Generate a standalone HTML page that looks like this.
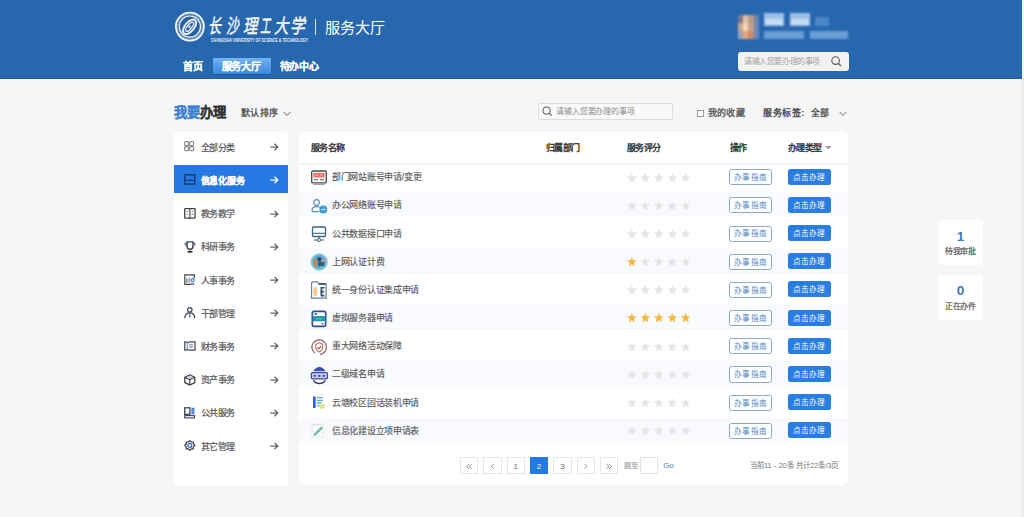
<!DOCTYPE html><html lang="zh-CN"><head><meta charset="utf-8"><style>
*{margin:0;padding:0;box-sizing:border-box;}
html,body{width:1024px;height:517px;overflow:hidden;background:#f6f6f6;font-family:"Liberation Sans",sans-serif;color:#333;}
.a{position:absolute;}
.t{position:absolute;white-space:nowrap;line-height:1;}
svg{position:absolute;overflow:visible;}
</style></head><body>
<div class="a" style="left:0;top:0;width:1024px;height:79px;background:#2767ae;"></div>
<div class="a" style="left:0;top:78px;width:1024px;height:1px;background:#23599a;"></div>
<svg style="left:174px;top:11px" width="32" height="32" viewBox="0 0 32 32">
<circle cx="15.9" cy="15.6" r="14.0" fill="none" stroke="#f4f8fd" stroke-width="1.8"/>
<circle cx="15.9" cy="15.6" r="12.2" fill="none" stroke="#c9dbf1" stroke-width="1.9" stroke-dasharray="1.1 0.7" opacity="0.55"/>
<circle cx="15.9" cy="15.6" r="10.6" fill="#285ea8" stroke="#f4f8fd" stroke-width="1.2"/>
<g transform="rotate(-50 15.6 15.8)">
<ellipse cx="15.6" cy="15.8" rx="8.6" ry="4.6" fill="none" stroke="#f2f7fd" stroke-width="1.9"/>
<ellipse cx="15.6" cy="15.8" rx="5.6" ry="2.2" fill="none" stroke="#e3eefa" stroke-width="1.3"/>
</g>
<circle cx="15.5" cy="15.7" r="1.2" fill="#e3eefa"/>
</svg>
<div class="t" style="left:211.0px;top:15.5px;font-family:'Liberation Serif',serif;font-weight:normal;font-size:13px;color:#f4f8fc;-webkit-text-stroke:0.35px #f4f8fc;transform:scale(1.000,1.5) skewX(-14deg);transform-origin:0 0;">长</div>
<div class="t" style="left:228.8px;top:15.5px;font-family:'Liberation Serif',serif;font-weight:normal;font-size:13px;color:#f4f8fc;-webkit-text-stroke:0.35px #f4f8fc;transform:scale(0.975,1.5) skewX(-14deg);transform-origin:0 0;">沙</div>
<div class="t" style="left:245.6px;top:15.5px;font-family:'Liberation Serif',serif;font-weight:normal;font-size:13px;color:#f4f8fc;-webkit-text-stroke:0.35px #f4f8fc;transform:scale(1.100,1.5) skewX(-14deg);transform-origin:0 0;">理</div>
<div class="t" style="left:262.3px;top:15.5px;font-family:'Liberation Serif',serif;font-weight:normal;font-size:13px;color:#f4f8fc;-webkit-text-stroke:0.35px #f4f8fc;transform:scale(0.808,1.5) skewX(-14deg);transform-origin:0 0;">工</div>
<div class="t" style="left:277.0px;top:15.5px;font-family:'Liberation Serif',serif;font-weight:normal;font-size:13px;color:#f4f8fc;-webkit-text-stroke:0.35px #f4f8fc;transform:scale(1.108,1.5) skewX(-14deg);transform-origin:0 0;">大</div>
<div class="t" style="left:293.3px;top:15.5px;font-family:'Liberation Serif',serif;font-weight:normal;font-size:13px;color:#f4f8fc;-webkit-text-stroke:0.35px #f4f8fc;transform:scale(1.142,1.5) skewX(-14deg);transform-origin:0 0;">学</div>
<svg style="left:211px;top:37px" width="98" height="6"><text x="0" y="4.6" font-family="Liberation Sans" font-weight="bold" font-size="5" fill="#e8eef7" textLength="97" lengthAdjust="spacingAndGlyphs">CHANGSHA UNIVERSITY OF SCIENCE &amp; TECHNOLOGY</text></svg>
<div class="a" style="left:315px;top:19px;width:1.4px;height:16px;background:#dbe6f3;"></div>
<div class="t" style="left:324.5px;top:20px;font-size:15.1px;color:#fff;">服务大厅</div>
<div class="a" style="left:212.5px;top:58px;width:58.3px;height:15.8px;border-radius:1px;background:linear-gradient(#76b4f5 0%,#5ca2ed 35%,#3d89de 100%);box-shadow:0 1px 1px rgba(20,70,140,0.5);"></div>
<div class="t" style="left:183px;top:61.8px;font-size:10px;letter-spacing:-0.3px;font-weight:bold;color:#fff;-webkit-text-stroke:0.15px #fff;">首页</div>
<div class="t" style="left:221.5px;top:61.8px;font-size:10px;letter-spacing:-0.3px;font-weight:bold;color:#fff;-webkit-text-stroke:0.15px #fff;">服务大厅</div>
<div class="t" style="left:279.5px;top:61.8px;font-size:10px;letter-spacing:-0.3px;font-weight:bold;color:#fff;-webkit-text-stroke:0.15px #fff;">待办中心</div>
<div class="a" style="left:730px;top:5px;width:130px;height:42px;filter:blur(0.9px);">
<div class="a" style="left:8.0px;top:10px;width:5.2px;height:8px;background:#7d7a8c;"></div>
<div class="a" style="left:13.200000000000045px;top:10px;width:5.2px;height:8px;background:#e0c3a8;"></div>
<div class="a" style="left:18.399999999999977px;top:10px;width:5.2px;height:8px;background:#b89a88;"></div>
<div class="a" style="left:23.600000000000023px;top:10px;width:5.2px;height:8px;background:#6f83ab;"></div>
<div class="a" style="left:8.0px;top:18px;width:5.2px;height:8px;background:#c6a98f;"></div>
<div class="a" style="left:13.200000000000045px;top:18px;width:5.2px;height:8px;background:#f1d8b8;"></div>
<div class="a" style="left:18.399999999999977px;top:18px;width:5.2px;height:8px;background:#c9a08a;"></div>
<div class="a" style="left:23.600000000000023px;top:18px;width:5.2px;height:8px;background:#6d86b5;"></div>
<div class="a" style="left:8.0px;top:26px;width:5.2px;height:8px;background:#9fa2b6;"></div>
<div class="a" style="left:13.200000000000045px;top:26px;width:5.2px;height:8px;background:#eaa47c;"></div>
<div class="a" style="left:18.399999999999977px;top:26px;width:5.2px;height:8px;background:#c98b70;"></div>
<div class="a" style="left:23.600000000000023px;top:26px;width:5.2px;height:8px;background:#6d8cc0;"></div>
<div class="a" style="left:34px;top:8px;width:20px;height:13px;background:#9fc0e7;"></div>
<div class="a" style="left:35px;top:14px;width:18px;height:6px;background:#c4dbf3;"></div>
<div class="a" style="left:60px;top:8px;width:20px;height:13px;background:#9fc0e7;"></div>
<div class="a" style="left:61px;top:14px;width:18px;height:6px;background:#c4dbf3;"></div>
<div class="a" style="left:85px;top:12px;width:14px;height:9px;background:#4d86c6;"></div>
<div class="a" style="left:34px;top:26px;width:40px;height:8px;background:#6b9cd4;"></div>
<div class="a" style="left:80px;top:26px;width:38px;height:8px;background:#6b9cd4;"></div>
</div>
<div class="a" style="left:738px;top:52px;width:111px;height:19px;background:#f2f2f2;border-radius:3px;"></div>
<div class="t" style="left:744px;top:57.5px;font-size:8px;letter-spacing:-0.4px;color:#a3a3a3;">请输入您要办理的事项</div>
<svg style="left:831px;top:56px" width="11" height="11"><circle cx="4.6" cy="4.6" r="3.8" fill="none" stroke="#555" stroke-width="1.1"/><path d="M7.4 7.4 L10 10" stroke="#555" stroke-width="1.2"/></svg>
<div class="t" style="left:173.5px;top:105.5px;font-size:13.3px;font-weight:bold;color:#333;-webkit-text-stroke:0.25px currentColor;"><span style="color:#3b80d6">我要</span>办理</div>
<div class="t" style="left:240.5px;top:108.5px;font-size:9px;letter-spacing:0.6px;font-weight:bold;color:#5a5a5a;">默认排序</div>
<svg style="left:283px;top:111px" width="8" height="6"><path d="M0.5 0.8 L4 4.5 L7.5 0.8" fill="none" stroke="#666" stroke-width="1"/></svg>
<div class="a" style="left:538px;top:103px;width:135px;height:17px;border:1px solid #dcdcdc;border-radius:2px;background:#f9f9f9;"></div>
<svg style="left:542px;top:106px" width="11" height="11"><circle cx="4.6" cy="4.6" r="3.7" fill="none" stroke="#555" stroke-width="1"/><path d="M7.3 7.3 L9.6 9.6" stroke="#555" stroke-width="1.1"/></svg>
<div class="t" style="left:556px;top:107.5px;font-size:8px;letter-spacing:-0.12px;color:#8c8c8c;">请输入您要办理的事项</div>
<div class="a" style="left:697.3px;top:110px;width:6.8px;height:6.8px;border:1px solid #9a9a9a;background:#fff;"></div>
<div class="t" style="left:707.5px;top:109px;font-size:9px;letter-spacing:0.4px;color:#555;-webkit-text-stroke:0.3px #555;">我的收藏</div>
<div class="t" style="left:763px;top:109px;font-size:9px;letter-spacing:0.55px;font-weight:bold;color:#444;">服务标签:</div>
<div class="t" style="left:811px;top:109px;font-size:8.9px;font-weight:bold;color:#555;">全部</div>
<svg style="left:839px;top:111px" width="8" height="6"><path d="M0.5 0.8 L4 4.5 L7.5 0.8" fill="none" stroke="#777" stroke-width="1"/></svg>
<div class="a" style="left:174px;top:131.5px;width:114px;height:354.5px;background:#fff;border-radius:4px;"></div>
<svg style="left:184px;top:141.3px" width="12" height="12" viewBox="0 0 12 12"><rect x="0.6" y="0.6" width="4" height="4" rx="1" fill="none" stroke="#888" stroke-width="1.1"/><rect x="5.6" y="0.6" width="4" height="4" rx="1" fill="none" stroke="#888" stroke-width="1.1"/><rect x="0.6" y="5.6" width="4" height="4" rx="1" fill="none" stroke="#888" stroke-width="1.1"/><rect x="5.6" y="5.6" width="4" height="4" rx="1" fill="none" stroke="#888" stroke-width="1.1"/></svg>
<div class="t" style="left:201px;top:143.8px;font-size:9px;letter-spacing:-0.6px;color:#555;font-weight:normal;-webkit-text-stroke:0.2px #555;">全部分类</div>
<svg style="left:270px;top:143.2px" width="9" height="8" viewBox="0 0 9 8"><path d="M0.3 4 H7.8 M4.5 0.7 L7.8 4 L4.5 7.3" fill="none" stroke="#666" stroke-width="1.25"/></svg>
<div class="a" style="left:174px;top:165.4px;width:114px;height:27.4px;background:#2479e2;"></div>
<svg style="left:184px;top:173.5px" width="12" height="12" viewBox="0 0 12 12"><rect x="0.8" y="0.8" width="10" height="9.2" fill="none" stroke="#143f7c" stroke-width="1.5"/><path d="M0.8 6.4 H10.8" stroke="#143f7c" stroke-width="1.3"/><path d="M3 8.3 H8.6" stroke="#3f79c9" stroke-width="0.8"/></svg>
<div class="t" style="left:200.5px;top:177.0px;font-size:9px;letter-spacing:-0.25px;color:#fff;font-weight:bold;-webkit-text-stroke:0.2px #fff;">信息化服务</div>
<svg style="left:270px;top:176.4px" width="9" height="8" viewBox="0 0 9 8"><path d="M0.3 4 H7.8 M4.5 0.7 L7.8 4 L4.5 7.3" fill="none" stroke="#fff" stroke-width="1.25"/></svg>
<svg style="left:184px;top:207.7px" width="12" height="12" viewBox="0 0 12 12"><rect x="0.7" y="0.7" width="10.4" height="9.4" rx="0.6" fill="none" stroke="#444" stroke-width="1.3"/><path d="M5.9 0.7 V10.6" stroke="#444" stroke-width="1.1"/><path d="M2.3 3.4 H4.3 M2.3 6.3 H4.3 M7.5 3.4 H9.5 M7.5 6.3 H9.5" stroke="#667" stroke-width="0.8"/><path d="M5.9 10 V11" stroke="#333" stroke-width="1.4"/></svg>
<div class="t" style="left:201px;top:210.2px;font-size:9px;letter-spacing:-0.6px;color:#555;font-weight:normal;-webkit-text-stroke:0.2px #555;">教务教学</div>
<svg style="left:270px;top:209.6px" width="9" height="8" viewBox="0 0 9 8"><path d="M0.3 4 H7.8 M4.5 0.7 L7.8 4 L4.5 7.3" fill="none" stroke="#666" stroke-width="1.25"/></svg>
<svg style="left:184px;top:240.9px" width="12" height="12" viewBox="0 0 12 12"><path d="M3 0.9 H9 V5 C9 7.3 7.6 8.3 6 8.3 C4.4 8.3 3 7.3 3 5 Z" fill="none" stroke="#3a3f55" stroke-width="1.4"/><path d="M3 2.3 H0.9 C0.9 4.3 1.9 5.3 3.1 5.3 M9 2.3 H11.1 C11.1 4.3 10.1 5.3 8.9 5.3" fill="none" stroke="#4a5478" stroke-width="1"/><path d="M6 8.3 V9.6" stroke="#333" stroke-width="1.2"/><path d="M3.6 10.8 H8.4" stroke="#222" stroke-width="1.6"/></svg>
<div class="t" style="left:201px;top:243.4px;font-size:9px;letter-spacing:-0.6px;color:#555;font-weight:normal;-webkit-text-stroke:0.2px #555;">科研事务</div>
<svg style="left:270px;top:242.8px" width="9" height="8" viewBox="0 0 9 8"><path d="M0.3 4 H7.8 M4.5 0.7 L7.8 4 L4.5 7.3" fill="none" stroke="#666" stroke-width="1.25"/></svg>
<svg style="left:184px;top:274.1px" width="12" height="12" viewBox="0 0 12 12"><path d="M7.5 10.3 H0.8 V0.8 H10.4 V4" fill="none" stroke="#444" stroke-width="1.2"/><path d="M3 4.5 V8.8" stroke="#555" stroke-width="1.1"/><path d="M5.2 3.8 V8.8" stroke="#888" stroke-width="1.1"/><circle cx="8.6" cy="6.2" r="1.6" fill="none" stroke="#3a6fd1" stroke-width="1.1"/><path d="M6.4 10.6 C6.6 8.6 10.6 8.6 10.8 10.6 Z" fill="#3a6fd1"/></svg>
<div class="t" style="left:201px;top:276.6px;font-size:9px;letter-spacing:-0.6px;color:#555;font-weight:normal;-webkit-text-stroke:0.2px #555;">人事事务</div>
<svg style="left:270px;top:276.0px" width="9" height="8" viewBox="0 0 9 8"><path d="M0.3 4 H7.8 M4.5 0.7 L7.8 4 L4.5 7.3" fill="none" stroke="#666" stroke-width="1.25"/></svg>
<svg style="left:184px;top:307.3px" width="12" height="12" viewBox="0 0 12 12"><circle cx="5.8" cy="2.8" r="2.2" fill="none" stroke="#3b3f4d" stroke-width="1.2"/><path d="M0.8 11.2 C1 7.3 3.2 5.9 5.8 5.9 C8.4 5.9 10.6 7.3 10.8 11.2" fill="none" stroke="#3b3f4d" stroke-width="1.2"/><path d="M5.8 6.2 V9.8" stroke="#4d6fb0" stroke-width="1.3"/><path d="M4.9 9.2 L5.8 11 L6.7 9.2 Z" fill="#4d6fb0"/></svg>
<div class="t" style="left:201px;top:309.8px;font-size:9px;letter-spacing:-0.6px;color:#555;font-weight:normal;-webkit-text-stroke:0.2px #555;">干部管理</div>
<svg style="left:270px;top:309.2px" width="9" height="8" viewBox="0 0 9 8"><path d="M0.3 4 H7.8 M4.5 0.7 L7.8 4 L4.5 7.3" fill="none" stroke="#666" stroke-width="1.25"/></svg>
<svg style="left:184px;top:340.5px" width="12" height="12" viewBox="0 0 12 12"><path d="M0.8 0.8 C2 0.8 2.8 1.6 3.3 1.6 C3.8 1.6 4.4 0.8 5.5 0.8 H11 V9.2 H5.5 C4.4 9.2 3.8 8.4 3.3 8.4 C2.8 8.4 2 9.2 0.8 9.2 Z" fill="none" stroke="#404552" stroke-width="1.2"/><path d="M3.3 1.6 V8.4" stroke="#5c7bb5" stroke-width="0.9"/><path d="M5.2 3.9 H8.8 M5.2 6 H8.8" stroke="#4d6fb0" stroke-width="1"/></svg>
<div class="t" style="left:201px;top:343.0px;font-size:9px;letter-spacing:-0.6px;color:#555;font-weight:normal;-webkit-text-stroke:0.2px #555;">财务事务</div>
<svg style="left:270px;top:342.4px" width="9" height="8" viewBox="0 0 9 8"><path d="M0.3 4 H7.8 M4.5 0.7 L7.8 4 L4.5 7.3" fill="none" stroke="#666" stroke-width="1.25"/></svg>
<svg style="left:184px;top:373.7px" width="12" height="12" viewBox="0 0 12 12"><path d="M5.8 0.8 L10.8 3.3 V8.6 L5.8 11 L0.8 8.6 V3.3 Z" fill="none" stroke="#333" stroke-width="1.2"/><path d="M0.8 3.3 L5.8 5.7 L10.8 3.3 M5.8 5.7 V11" fill="none" stroke="#333" stroke-width="1.1"/><path d="M4 2.9 L7.5 1.8 M5 4.2 L8.5 3.1" stroke="#8aa2c9" stroke-width="0.8"/></svg>
<div class="t" style="left:201px;top:376.2px;font-size:9px;letter-spacing:-0.6px;color:#555;font-weight:normal;-webkit-text-stroke:0.2px #555;">资产事务</div>
<svg style="left:270px;top:375.6px" width="9" height="8" viewBox="0 0 9 8"><path d="M0.3 4 H7.8 M4.5 0.7 L7.8 4 L4.5 7.3" fill="none" stroke="#666" stroke-width="1.25"/></svg>
<svg style="left:184px;top:406.9px" width="12" height="12" viewBox="0 0 12 12"><rect x="0.7" y="0.8" width="5.2" height="6.6" fill="none" stroke="#3f4452" stroke-width="1.3"/><path d="M7.4 0.8 H10.4 V7.2 H7.4 Z" fill="#3b78d8"/><path d="M7.4 2.9 H10.4 M7.4 5 H10.4" stroke="#a9c8f2" stroke-width="0.6"/><rect x="0.7" y="8.6" width="9.8" height="2.3" fill="none" stroke="#3f4452" stroke-width="1.1"/></svg>
<div class="t" style="left:201px;top:409.4px;font-size:9px;letter-spacing:-0.6px;color:#555;font-weight:normal;-webkit-text-stroke:0.2px #555;">公共服务</div>
<svg style="left:270px;top:408.8px" width="9" height="8" viewBox="0 0 9 8"><path d="M0.3 4 H7.8 M4.5 0.7 L7.8 4 L4.5 7.3" fill="none" stroke="#666" stroke-width="1.25"/></svg>
<svg style="left:184px;top:440.1px" width="12" height="12" viewBox="0 0 12 12"><path d="M5.8 0.6 L7.3 2 L9.3 2 L9.4 4 L10.9 5.4 L9.4 6.9 L9.3 8.9 L7.3 8.9 L5.8 10.3 L4.3 8.9 L2.3 8.9 L2.2 6.9 L0.7 5.4 L2.2 4 L2.3 2 L4.3 2 Z" fill="none" stroke="#353a45" stroke-width="1.2" stroke-linejoin="round"/><circle cx="5.8" cy="5.45" r="2" fill="#dbe7fb" stroke="#3f6fc7" stroke-width="1.2"/></svg>
<div class="t" style="left:201px;top:442.6px;font-size:9px;letter-spacing:-0.6px;color:#555;font-weight:normal;-webkit-text-stroke:0.2px #555;">其它管理</div>
<svg style="left:270px;top:442.0px" width="9" height="8" viewBox="0 0 9 8"><path d="M0.3 4 H7.8 M4.5 0.7 L7.8 4 L4.5 7.3" fill="none" stroke="#666" stroke-width="1.25"/></svg>
<div class="a" style="left:299px;top:132px;width:549px;height:352.5px;background:#fff;border-radius:5px;"></div>
<div class="a" style="left:299px;top:163px;width:549px;height:2px;background:#f3f3f3;"></div>
<div class="t" style="left:311px;top:143.5px;font-size:9px;letter-spacing:-0.6px;font-weight:normal;color:#333;-webkit-text-stroke:0.4px #333;">服务名称</div>
<div class="t" style="left:546px;top:143.5px;font-size:9px;letter-spacing:-0.6px;font-weight:normal;color:#333;-webkit-text-stroke:0.4px #333;">归属部门</div>
<div class="t" style="left:627px;top:143.5px;font-size:9px;letter-spacing:-0.6px;font-weight:normal;color:#333;-webkit-text-stroke:0.4px #333;">服务评分</div>
<div class="t" style="left:729.5px;top:143.5px;font-size:9px;letter-spacing:-0.6px;font-weight:normal;color:#333;-webkit-text-stroke:0.4px #333;">操作</div>
<div class="t" style="left:788px;top:143.5px;font-size:9px;letter-spacing:-0.6px;font-weight:normal;color:#333;-webkit-text-stroke:0.4px #333;">办理类型</div>
<svg style="left:825px;top:146px" width="7" height="4"><path d="M0 0 H6.5 L3.25 3.5 Z" fill="#999"/></svg>
<svg style="left:311px;top:168.7px" width="16" height="16" viewBox="0 0 16 16"><g transform="translate(8 9) scale(1.03) translate(-8 -8)"><rect x="0.9" y="1.2" width="14.2" height="11.6" rx="1.2" fill="#fff" stroke="#4a4a4a" stroke-width="1.3"/><rect x="2.6" y="3" width="10.8" height="4.4" fill="#ec6f68"/><path d="M4.5 5.2 H7 M9 5.2 H11.5" stroke="#ffd0cc" stroke-width="0.8"/><path d="M3 9.6 H7 M9 9.6 H13" stroke="#555" stroke-width="1"/><path d="M2.5 14.2 H13.5" stroke="#999" stroke-width="1"/></g></svg>
<div class="t" style="left:332px;top:173.1px;font-size:9px;letter-spacing:-0.3px;color:#555;-webkit-text-stroke:0.12px #555;">部门网站账号申请/变更</div>
<svg style="left:627px;top:172.5px" width="70" height="10"><polygon points="4.90,-0.10 6.25,3.14 9.75,3.42 7.08,5.71 7.90,9.13 4.90,7.29 1.90,9.13 2.72,5.71 0.05,3.42 3.55,3.14" fill="#e5e5e5"/><polygon points="18.35,-0.10 19.70,3.14 23.20,3.42 20.53,5.71 21.35,9.13 18.35,7.29 15.35,9.13 16.17,5.71 13.50,3.42 17.00,3.14" fill="#e5e5e5"/><polygon points="31.80,-0.10 33.15,3.14 36.65,3.42 33.98,5.71 34.80,9.13 31.80,7.29 28.80,9.13 29.62,5.71 26.95,3.42 30.45,3.14" fill="#e5e5e5"/><polygon points="45.25,-0.10 46.60,3.14 50.10,3.42 47.43,5.71 48.25,9.13 45.25,7.29 42.25,9.13 43.07,5.71 40.40,3.42 43.90,3.14" fill="#e5e5e5"/><polygon points="58.70,-0.10 60.05,3.14 63.55,3.42 60.88,5.71 61.70,9.13 58.70,7.29 55.70,9.13 56.52,5.71 53.85,3.42 57.35,3.14" fill="#e5e5e5"/></svg>
<div class="a" style="left:729.3px;top:169.1px;width:43px;height:16.3px;border:1px solid #8fa8c8;border-radius:2.5px;background:#fff;"></div>
<div class="t" style="left:734.3px;top:174.0px;font-size:7.6px;letter-spacing:0.15px;color:#4f84c4;">办事指南</div>
<div class="a" style="left:788.1px;top:168.6px;width:43px;height:16.2px;border-radius:2.5px;background:#2a7de1;"></div>
<div class="t" style="left:793.4px;top:173.7px;font-size:7.6px;color:#fff;">点击办理</div>
<div class="a" style="left:299px;top:192.2px;width:549px;height:25.2px;background:#f9fafd;"></div>
<svg style="left:311px;top:196.8px" width="16" height="16" viewBox="0 0 16 16"><g transform="translate(8.3 9.5) scale(1.0) translate(-8 -8)"><circle cx="5.2" cy="4" r="2.8" fill="none" stroke="#5a8fb2" stroke-width="1.2"/><path d="M0.9 13.2 V11 C0.9 9 2.5 8.2 5.2 8.2 C6.6 8.2 7.6 8.4 8.4 8.8 M0.9 13.2 H8" fill="none" stroke="#5a8fb2" stroke-width="1.2"/><circle cx="12" cy="11" r="3.9" fill="#3797d6"/><path d="M9.6 11 H14.4" stroke="#cfeaff" stroke-width="1"/><path d="M12 8.6 V13.4" stroke="#8cc8ef" stroke-width="0.7"/></g></svg>
<div class="t" style="left:332px;top:201.2px;font-size:9px;letter-spacing:-0.3px;color:#555;-webkit-text-stroke:0.12px #555;">办公网络账号申请</div>
<svg style="left:627px;top:200.7px" width="70" height="10"><polygon points="4.90,-0.10 6.25,3.14 9.75,3.42 7.08,5.71 7.90,9.13 4.90,7.29 1.90,9.13 2.72,5.71 0.05,3.42 3.55,3.14" fill="#e5e5e5"/><polygon points="18.35,-0.10 19.70,3.14 23.20,3.42 20.53,5.71 21.35,9.13 18.35,7.29 15.35,9.13 16.17,5.71 13.50,3.42 17.00,3.14" fill="#e5e5e5"/><polygon points="31.80,-0.10 33.15,3.14 36.65,3.42 33.98,5.71 34.80,9.13 31.80,7.29 28.80,9.13 29.62,5.71 26.95,3.42 30.45,3.14" fill="#e5e5e5"/><polygon points="45.25,-0.10 46.60,3.14 50.10,3.42 47.43,5.71 48.25,9.13 45.25,7.29 42.25,9.13 43.07,5.71 40.40,3.42 43.90,3.14" fill="#e5e5e5"/><polygon points="58.70,-0.10 60.05,3.14 63.55,3.42 60.88,5.71 61.70,9.13 58.70,7.29 55.70,9.13 56.52,5.71 53.85,3.42 57.35,3.14" fill="#e5e5e5"/></svg>
<div class="a" style="left:729.3px;top:197.2px;width:43px;height:16.3px;border:1px solid #8fa8c8;border-radius:2.5px;background:#fff;"></div>
<div class="t" style="left:734.3px;top:202.2px;font-size:7.6px;letter-spacing:0.15px;color:#4f84c4;">办事指南</div>
<div class="a" style="left:788.1px;top:196.8px;width:43px;height:16.2px;border-radius:2.5px;background:#2a7de1;"></div>
<div class="t" style="left:793.4px;top:201.8px;font-size:7.6px;color:#fff;">点击办理</div>
<svg style="left:311px;top:225.1px" width="16" height="16" viewBox="0 0 16 16"><g transform="translate(8 9) scale(1.0) translate(-8 -8)"><rect x="1.5" y="1" width="13" height="9.5" rx="1" fill="none" stroke="#3e6280" stroke-width="1.3"/><path d="M1.5 7.3 H14.5" stroke="#3e6280" stroke-width="1.1"/><path d="M8 10.5 V12.6" stroke="#3e6280" stroke-width="1.2"/><circle cx="8" cy="14" r="1.5" fill="#fff" stroke="#3e6280" stroke-width="1.1"/><path d="M2.8 14 H6.4 M9.6 14 H13.2" stroke="#3e6280" stroke-width="1.1"/></g></svg>
<div class="t" style="left:332px;top:229.5px;font-size:9px;letter-spacing:-0.3px;color:#555;-webkit-text-stroke:0.12px #555;">公共数据接口申请</div>
<svg style="left:627px;top:228.9px" width="70" height="10"><polygon points="4.90,-0.10 6.25,3.14 9.75,3.42 7.08,5.71 7.90,9.13 4.90,7.29 1.90,9.13 2.72,5.71 0.05,3.42 3.55,3.14" fill="#e5e5e5"/><polygon points="18.35,-0.10 19.70,3.14 23.20,3.42 20.53,5.71 21.35,9.13 18.35,7.29 15.35,9.13 16.17,5.71 13.50,3.42 17.00,3.14" fill="#e5e5e5"/><polygon points="31.80,-0.10 33.15,3.14 36.65,3.42 33.98,5.71 34.80,9.13 31.80,7.29 28.80,9.13 29.62,5.71 26.95,3.42 30.45,3.14" fill="#e5e5e5"/><polygon points="45.25,-0.10 46.60,3.14 50.10,3.42 47.43,5.71 48.25,9.13 45.25,7.29 42.25,9.13 43.07,5.71 40.40,3.42 43.90,3.14" fill="#e5e5e5"/><polygon points="58.70,-0.10 60.05,3.14 63.55,3.42 60.88,5.71 61.70,9.13 58.70,7.29 55.70,9.13 56.52,5.71 53.85,3.42 57.35,3.14" fill="#e5e5e5"/></svg>
<div class="a" style="left:729.3px;top:225.5px;width:43px;height:16.3px;border:1px solid #8fa8c8;border-radius:2.5px;background:#fff;"></div>
<div class="t" style="left:734.3px;top:230.4px;font-size:7.6px;letter-spacing:0.15px;color:#4f84c4;">办事指南</div>
<div class="a" style="left:788.1px;top:225.0px;width:43px;height:16.2px;border-radius:2.5px;background:#2a7de1;"></div>
<div class="t" style="left:793.4px;top:230.1px;font-size:7.6px;color:#fff;">点击办理</div>
<div class="a" style="left:299px;top:248.7px;width:549px;height:25.2px;background:#f9fafd;"></div>
<svg style="left:311px;top:253.2px" width="16" height="16" viewBox="0 0 16 16"><g transform="translate(8.2 9) scale(1.11) translate(-8 -8)"><circle cx="8" cy="8" r="7.8" fill="#8ec5dc"/><circle cx="8" cy="8" r="6.2" fill="#5fa8c9"/><path d="M3 7 C3 5 4.5 4.5 5.5 6 L6 12 L3.2 12 Z" fill="#c98a3f"/><rect x="6.5" y="4" width="3.5" height="3" fill="#1d4766"/><rect x="7" y="7.5" width="5.5" height="4.5" fill="#2a5e7a"/><rect x="10" y="5.5" width="3" height="2.5" fill="#b99a9a"/><path d="M8 12.5 H12" stroke="#64d6c0" stroke-width="1.2"/></g></svg>
<div class="t" style="left:332px;top:257.6px;font-size:9px;letter-spacing:-0.3px;color:#555;-webkit-text-stroke:0.12px #555;">上网认证计费</div>
<svg style="left:627px;top:257.1px" width="70" height="10"><polygon points="4.90,-0.10 6.25,3.14 9.75,3.42 7.08,5.71 7.90,9.13 4.90,7.29 1.90,9.13 2.72,5.71 0.05,3.42 3.55,3.14" fill="#f4b843"/><polygon points="18.35,-0.10 19.70,3.14 23.20,3.42 20.53,5.71 21.35,9.13 18.35,7.29 15.35,9.13 16.17,5.71 13.50,3.42 17.00,3.14" fill="#e5e5e5"/><polygon points="31.80,-0.10 33.15,3.14 36.65,3.42 33.98,5.71 34.80,9.13 31.80,7.29 28.80,9.13 29.62,5.71 26.95,3.42 30.45,3.14" fill="#e5e5e5"/><polygon points="45.25,-0.10 46.60,3.14 50.10,3.42 47.43,5.71 48.25,9.13 45.25,7.29 42.25,9.13 43.07,5.71 40.40,3.42 43.90,3.14" fill="#e5e5e5"/><polygon points="58.70,-0.10 60.05,3.14 63.55,3.42 60.88,5.71 61.70,9.13 58.70,7.29 55.70,9.13 56.52,5.71 53.85,3.42 57.35,3.14" fill="#e5e5e5"/></svg>
<div class="a" style="left:729.3px;top:253.7px;width:43px;height:16.3px;border:1px solid #8fa8c8;border-radius:2.5px;background:#fff;"></div>
<div class="t" style="left:734.3px;top:258.6px;font-size:7.6px;letter-spacing:0.15px;color:#4f84c4;">办事指南</div>
<div class="a" style="left:788.1px;top:253.2px;width:43px;height:16.2px;border-radius:2.5px;background:#2a7de1;"></div>
<div class="t" style="left:793.4px;top:258.2px;font-size:7.6px;color:#fff;">点击办理</div>
<svg style="left:311px;top:281.4px" width="16" height="16" viewBox="0 0 16 16"><g transform="translate(8.4 9) scale(1.12) translate(-8 -8)"><path d="M1 2 C1 1.2 1.5 0.8 2.2 0.8 H6.5 L7.5 2.6 H14 V15.2 H1 Z" fill="#fff" stroke="#6c8197" stroke-width="1.1"/><path d="M7.5 2.6 H13.2" stroke="#2d4f73" stroke-width="1.6"/><rect x="2.6" y="5.4" width="3.4" height="8" rx="1.5" fill="#f6c988"/><path d="M8.2 9.4 H9.4" stroke="#8fb1d0" stroke-width="1"/><path d="M12.5 6 H9.8 V13 H12.5 M9.8 9.4 H12.2" fill="none" stroke="#2d4a66" stroke-width="1.5"/></g></svg>
<div class="t" style="left:332px;top:285.8px;font-size:9px;letter-spacing:-0.3px;color:#555;-webkit-text-stroke:0.12px #555;">统一身份认证集成申请</div>
<svg style="left:627px;top:285.2px" width="70" height="10"><polygon points="4.90,-0.10 6.25,3.14 9.75,3.42 7.08,5.71 7.90,9.13 4.90,7.29 1.90,9.13 2.72,5.71 0.05,3.42 3.55,3.14" fill="#e5e5e5"/><polygon points="18.35,-0.10 19.70,3.14 23.20,3.42 20.53,5.71 21.35,9.13 18.35,7.29 15.35,9.13 16.17,5.71 13.50,3.42 17.00,3.14" fill="#e5e5e5"/><polygon points="31.80,-0.10 33.15,3.14 36.65,3.42 33.98,5.71 34.80,9.13 31.80,7.29 28.80,9.13 29.62,5.71 26.95,3.42 30.45,3.14" fill="#e5e5e5"/><polygon points="45.25,-0.10 46.60,3.14 50.10,3.42 47.43,5.71 48.25,9.13 45.25,7.29 42.25,9.13 43.07,5.71 40.40,3.42 43.90,3.14" fill="#e5e5e5"/><polygon points="58.70,-0.10 60.05,3.14 63.55,3.42 60.88,5.71 61.70,9.13 58.70,7.29 55.70,9.13 56.52,5.71 53.85,3.42 57.35,3.14" fill="#e5e5e5"/></svg>
<div class="a" style="left:729.3px;top:281.8px;width:43px;height:16.3px;border:1px solid #8fa8c8;border-radius:2.5px;background:#fff;"></div>
<div class="t" style="left:734.3px;top:286.8px;font-size:7.6px;letter-spacing:0.15px;color:#4f84c4;">办事指南</div>
<div class="a" style="left:788.1px;top:281.3px;width:43px;height:16.2px;border-radius:2.5px;background:#2a7de1;"></div>
<div class="t" style="left:793.4px;top:286.4px;font-size:7.6px;color:#fff;">点击办理</div>
<div class="a" style="left:299px;top:305.0px;width:549px;height:25.2px;background:#f9fafd;"></div>
<svg style="left:311px;top:309.6px" width="16" height="16" viewBox="0 0 16 16"><g transform="translate(8 8.5) scale(1.0) translate(-8 -8)"><rect x="1.3" y="0.9" width="13.4" height="15" rx="1.8" fill="#fff" stroke="#2f4d86" stroke-width="1.6"/><rect x="1.5" y="5.6" width="13" height="5.2" fill="#2a8fb0"/><path d="M4.5 8.2 H11.5" stroke="#37c7a0" stroke-width="1.6"/><rect x="3.5" y="2.8" width="2.4" height="1.6" fill="#2f4d86"/><path d="M10.5 13.3 H12.5" stroke="#2f4d86" stroke-width="1.2"/></g></svg>
<div class="t" style="left:332px;top:314.0px;font-size:9px;letter-spacing:-0.3px;color:#555;-webkit-text-stroke:0.12px #555;">虚拟服务器申请</div>
<svg style="left:627px;top:313.4px" width="70" height="10"><polygon points="4.90,-0.10 6.25,3.14 9.75,3.42 7.08,5.71 7.90,9.13 4.90,7.29 1.90,9.13 2.72,5.71 0.05,3.42 3.55,3.14" fill="#f4b843"/><polygon points="18.35,-0.10 19.70,3.14 23.20,3.42 20.53,5.71 21.35,9.13 18.35,7.29 15.35,9.13 16.17,5.71 13.50,3.42 17.00,3.14" fill="#f4b843"/><polygon points="31.80,-0.10 33.15,3.14 36.65,3.42 33.98,5.71 34.80,9.13 31.80,7.29 28.80,9.13 29.62,5.71 26.95,3.42 30.45,3.14" fill="#f4b843"/><polygon points="45.25,-0.10 46.60,3.14 50.10,3.42 47.43,5.71 48.25,9.13 45.25,7.29 42.25,9.13 43.07,5.71 40.40,3.42 43.90,3.14" fill="#f4b843"/><polygon points="58.70,-0.10 60.05,3.14 63.55,3.42 60.88,5.71 61.70,9.13 58.70,7.29 55.70,9.13 56.52,5.71 53.85,3.42 57.35,3.14" fill="#f4b843"/></svg>
<div class="a" style="left:729.3px;top:310.0px;width:43px;height:16.3px;border:1px solid #8fa8c8;border-radius:2.5px;background:#fff;"></div>
<div class="t" style="left:734.3px;top:314.9px;font-size:7.6px;letter-spacing:0.15px;color:#4f84c4;">办事指南</div>
<div class="a" style="left:788.1px;top:309.5px;width:43px;height:16.2px;border-radius:2.5px;background:#2a7de1;"></div>
<div class="t" style="left:793.4px;top:314.6px;font-size:7.6px;color:#fff;">点击办理</div>
<svg style="left:311px;top:337.9px" width="16" height="16" viewBox="0 0 16 16"><g transform="translate(8.6 9.6) scale(1.08) translate(-8 -8)"><circle cx="7.6" cy="7.6" r="6.7" fill="none" stroke="#8d5b58" stroke-width="1.1" stroke-dasharray="37 5" transform="rotate(125 7.6 7.6)"/><path d="M7.6 3.6 L10.8 5 V8 C10.8 10 9.4 11.2 7.6 12 C5.8 11.2 4.4 10 4.4 8 V5 Z" fill="none" stroke="#c26a64" stroke-width="1"/><path d="M6 7.8 L7.3 9.1 L9.4 6.7" fill="none" stroke="#7a4a48" stroke-width="1"/></g></svg>
<div class="t" style="left:332px;top:342.2px;font-size:9px;letter-spacing:-0.3px;color:#555;-webkit-text-stroke:0.12px #555;">重大网络活动保障</div>
<svg style="left:627px;top:341.7px" width="70" height="10"><polygon points="4.90,-0.10 6.25,3.14 9.75,3.42 7.08,5.71 7.90,9.13 4.90,7.29 1.90,9.13 2.72,5.71 0.05,3.42 3.55,3.14" fill="#e5e5e5"/><polygon points="18.35,-0.10 19.70,3.14 23.20,3.42 20.53,5.71 21.35,9.13 18.35,7.29 15.35,9.13 16.17,5.71 13.50,3.42 17.00,3.14" fill="#e5e5e5"/><polygon points="31.80,-0.10 33.15,3.14 36.65,3.42 33.98,5.71 34.80,9.13 31.80,7.29 28.80,9.13 29.62,5.71 26.95,3.42 30.45,3.14" fill="#e5e5e5"/><polygon points="45.25,-0.10 46.60,3.14 50.10,3.42 47.43,5.71 48.25,9.13 45.25,7.29 42.25,9.13 43.07,5.71 40.40,3.42 43.90,3.14" fill="#e5e5e5"/><polygon points="58.70,-0.10 60.05,3.14 63.55,3.42 60.88,5.71 61.70,9.13 58.70,7.29 55.70,9.13 56.52,5.71 53.85,3.42 57.35,3.14" fill="#e5e5e5"/></svg>
<div class="a" style="left:729.3px;top:338.2px;width:43px;height:16.3px;border:1px solid #8fa8c8;border-radius:2.5px;background:#fff;"></div>
<div class="t" style="left:734.3px;top:343.2px;font-size:7.6px;letter-spacing:0.15px;color:#4f84c4;">办事指南</div>
<div class="a" style="left:788.1px;top:337.8px;width:43px;height:16.2px;border-radius:2.5px;background:#2a7de1;"></div>
<div class="t" style="left:793.4px;top:342.9px;font-size:7.6px;color:#fff;">点击办理</div>
<div class="a" style="left:299px;top:361.4px;width:549px;height:25.2px;background:#f9fafd;"></div>
<svg style="left:311px;top:366.1px" width="16" height="16" viewBox="0 0 16 16"><g transform="translate(8.4 9.1) scale(1.1) translate(-8 -8)"><path d="M2.4 4.6 C3.6 2 5.6 0.6 8 0.6 C10.4 0.6 12.4 2 13.6 4.6 Z" fill="#3d4fb0"/><rect x="0.7" y="5.8" width="14.6" height="5.6" rx="1" fill="#c8cdf2" stroke="#3e4a9a" stroke-width="1.1"/><path d="M2.8 8.7 H4.8 M6.9 8.7 H8.9 M11 8.7 H13" stroke="#3341a3" stroke-width="1.6"/><path d="M2.6 12.8 C3.6 14.6 5.6 15.6 8 15.6 C10.4 15.6 12.4 14.6 13.4 12.8" fill="none" stroke="#2f3a6a" stroke-width="1.3"/></g></svg>
<div class="t" style="left:332px;top:370.4px;font-size:9px;letter-spacing:-0.3px;color:#555;-webkit-text-stroke:0.12px #555;">二级域名申请</div>
<svg style="left:627px;top:369.9px" width="70" height="10"><polygon points="4.90,-0.10 6.25,3.14 9.75,3.42 7.08,5.71 7.90,9.13 4.90,7.29 1.90,9.13 2.72,5.71 0.05,3.42 3.55,3.14" fill="#e5e5e5"/><polygon points="18.35,-0.10 19.70,3.14 23.20,3.42 20.53,5.71 21.35,9.13 18.35,7.29 15.35,9.13 16.17,5.71 13.50,3.42 17.00,3.14" fill="#e5e5e5"/><polygon points="31.80,-0.10 33.15,3.14 36.65,3.42 33.98,5.71 34.80,9.13 31.80,7.29 28.80,9.13 29.62,5.71 26.95,3.42 30.45,3.14" fill="#e5e5e5"/><polygon points="45.25,-0.10 46.60,3.14 50.10,3.42 47.43,5.71 48.25,9.13 45.25,7.29 42.25,9.13 43.07,5.71 40.40,3.42 43.90,3.14" fill="#e5e5e5"/><polygon points="58.70,-0.10 60.05,3.14 63.55,3.42 60.88,5.71 61.70,9.13 58.70,7.29 55.70,9.13 56.52,5.71 53.85,3.42 57.35,3.14" fill="#e5e5e5"/></svg>
<div class="a" style="left:729.3px;top:366.4px;width:43px;height:16.3px;border:1px solid #8fa8c8;border-radius:2.5px;background:#fff;"></div>
<div class="t" style="left:734.3px;top:371.4px;font-size:7.6px;letter-spacing:0.15px;color:#4f84c4;">办事指南</div>
<div class="a" style="left:788.1px;top:365.9px;width:43px;height:16.2px;border-radius:2.5px;background:#2a7de1;"></div>
<div class="t" style="left:793.4px;top:371.1px;font-size:7.6px;color:#fff;">点击办理</div>
<svg style="left:311px;top:394.2px" width="16" height="16" viewBox="0 0 16 16"><g transform="translate(8.2 9) scale(1.0) translate(-8 -8)"><rect x="1.8" y="1.5" width="2.6" height="11.5" fill="#2e5be6"/><path d="M5.6 2.6 H11.6 M5.6 5.3 H11.6 M5.6 8 H10.2 M5.6 10.7 H8.6" stroke="#59a7c0" stroke-width="1.3"/><circle cx="11.2" cy="11.6" r="2.5" fill="#e6e08c"/></g></svg>
<div class="t" style="left:332px;top:398.6px;font-size:9px;letter-spacing:-0.3px;color:#555;-webkit-text-stroke:0.12px #555;">云塘校区固话装机申请</div>
<svg style="left:627px;top:398.1px" width="70" height="10"><polygon points="4.90,-0.10 6.25,3.14 9.75,3.42 7.08,5.71 7.90,9.13 4.90,7.29 1.90,9.13 2.72,5.71 0.05,3.42 3.55,3.14" fill="#e5e5e5"/><polygon points="18.35,-0.10 19.70,3.14 23.20,3.42 20.53,5.71 21.35,9.13 18.35,7.29 15.35,9.13 16.17,5.71 13.50,3.42 17.00,3.14" fill="#e5e5e5"/><polygon points="31.80,-0.10 33.15,3.14 36.65,3.42 33.98,5.71 34.80,9.13 31.80,7.29 28.80,9.13 29.62,5.71 26.95,3.42 30.45,3.14" fill="#e5e5e5"/><polygon points="45.25,-0.10 46.60,3.14 50.10,3.42 47.43,5.71 48.25,9.13 45.25,7.29 42.25,9.13 43.07,5.71 40.40,3.42 43.90,3.14" fill="#e5e5e5"/><polygon points="58.70,-0.10 60.05,3.14 63.55,3.42 60.88,5.71 61.70,9.13 58.70,7.29 55.70,9.13 56.52,5.71 53.85,3.42 57.35,3.14" fill="#e5e5e5"/></svg>
<div class="a" style="left:729.3px;top:394.6px;width:43px;height:16.3px;border:1px solid #8fa8c8;border-radius:2.5px;background:#fff;"></div>
<div class="t" style="left:734.3px;top:399.6px;font-size:7.6px;letter-spacing:0.15px;color:#4f84c4;">办事指南</div>
<div class="a" style="left:788.1px;top:394.1px;width:43px;height:16.2px;border-radius:2.5px;background:#2a7de1;"></div>
<div class="t" style="left:793.4px;top:399.2px;font-size:7.6px;color:#fff;">点击办理</div>
<div class="a" style="left:299px;top:417.8px;width:549px;height:25.2px;background:#f9fafd;"></div>
<svg style="left:311px;top:422.4px" width="16" height="16" viewBox="0 0 16 16"><g transform="translate(8 8.5) scale(1.0) translate(-8 -8)"><rect x="1" y="1.6" width="11.6" height="13.4" fill="#fbfcfb" stroke="#e3e6e3" stroke-width="0.8"/><path d="M2.6 1.8 V2.8 M5 1.8 V2.8 M7.4 1.8 V2.8 M9.8 1.8 V2.8" stroke="#bbb" stroke-width="1"/><path d="M3.8 12 L10.5 5.5" stroke="#7cbfa6" stroke-width="2.6" stroke-linecap="round"/></g></svg>
<div class="t" style="left:332px;top:426.8px;font-size:9px;letter-spacing:-0.3px;color:#555;-webkit-text-stroke:0.12px #555;">信息化建设立项申请表</div>
<svg style="left:627px;top:426.2px" width="70" height="10"><polygon points="4.90,-0.10 6.25,3.14 9.75,3.42 7.08,5.71 7.90,9.13 4.90,7.29 1.90,9.13 2.72,5.71 0.05,3.42 3.55,3.14" fill="#e5e5e5"/><polygon points="18.35,-0.10 19.70,3.14 23.20,3.42 20.53,5.71 21.35,9.13 18.35,7.29 15.35,9.13 16.17,5.71 13.50,3.42 17.00,3.14" fill="#e5e5e5"/><polygon points="31.80,-0.10 33.15,3.14 36.65,3.42 33.98,5.71 34.80,9.13 31.80,7.29 28.80,9.13 29.62,5.71 26.95,3.42 30.45,3.14" fill="#e5e5e5"/><polygon points="45.25,-0.10 46.60,3.14 50.10,3.42 47.43,5.71 48.25,9.13 45.25,7.29 42.25,9.13 43.07,5.71 40.40,3.42 43.90,3.14" fill="#e5e5e5"/><polygon points="58.70,-0.10 60.05,3.14 63.55,3.42 60.88,5.71 61.70,9.13 58.70,7.29 55.70,9.13 56.52,5.71 53.85,3.42 57.35,3.14" fill="#e5e5e5"/></svg>
<div class="a" style="left:729.3px;top:422.8px;width:43px;height:16.3px;border:1px solid #8fa8c8;border-radius:2.5px;background:#fff;"></div>
<div class="t" style="left:734.3px;top:427.8px;font-size:7.6px;letter-spacing:0.15px;color:#4f84c4;">办事指南</div>
<div class="a" style="left:788.1px;top:422.3px;width:43px;height:16.2px;border-radius:2.5px;background:#2a7de1;"></div>
<div class="t" style="left:793.4px;top:427.4px;font-size:7.6px;color:#fff;">点击办理</div>
<div class="a" style="left:460.0px;top:456.8px;width:18.4px;height:17px;border:1px solid #e6e6e6;background:#fff;"></div>
<svg style="left:466.4px;top:463.6px" width="6.2" height="5" viewBox="0 0 6.2 5"><path d="M3 0.3 L0.6 2.5 L3 4.7 M5.6 0.3 L3.2 2.5 L5.6 4.7" fill="none" stroke="#8a8a8a" stroke-width="1"/></svg>
<div class="a" style="left:483.3px;top:456.8px;width:18.4px;height:17px;border:1px solid #e6e6e6;background:#fff;"></div>
<svg style="left:489.7px;top:463.6px" width="6.2" height="5" viewBox="0 0 6.2 5"><path d="M3.6 0.3 L1.4 2.5 L3.6 4.7" fill="none" stroke="#8a8a8a" stroke-width="1"/></svg>
<div class="a" style="left:506.6px;top:456.8px;width:18.4px;height:17px;border:1px solid #e6e6e6;background:#fff;"></div>
<div class="t" style="left:506.6px;top:462.5px;width:18.4px;text-align:center;font-size:8px;color:#666;">1</div>
<div class="a" style="left:529.9px;top:456.8px;width:18.4px;height:17px;border:1px solid #2479e2;background:#2479e2;"></div>
<div class="t" style="left:529.9px;top:462.5px;width:18.4px;text-align:center;font-size:8px;color:#fff;">2</div>
<div class="a" style="left:553.2px;top:456.8px;width:18.4px;height:17px;border:1px solid #e6e6e6;background:#fff;"></div>
<div class="t" style="left:553.2px;top:462.5px;width:18.4px;text-align:center;font-size:8px;color:#666;">3</div>
<div class="a" style="left:576.5px;top:456.8px;width:18.4px;height:17px;border:1px solid #e6e6e6;background:#fff;"></div>
<svg style="left:582.9px;top:463.6px" width="6.2" height="5" viewBox="0 0 6.2 5"><path d="M1.6 0.3 L3.8 2.5 L1.6 4.7" fill="none" stroke="#8a8a8a" stroke-width="1"/></svg>
<div class="a" style="left:599.8px;top:456.8px;width:18.4px;height:17px;border:1px solid #e6e6e6;background:#fff;"></div>
<svg style="left:606.2px;top:463.6px" width="6.2" height="5" viewBox="0 0 6.2 5"><path d="M0.6 0.3 L3 2.5 L0.6 4.7 M3.2 0.3 L5.6 2.5 L3.2 4.7" fill="none" stroke="#8a8a8a" stroke-width="1"/></svg>
<div class="t" style="left:624px;top:462px;font-size:7.4px;color:#8a8a8a;">跳至</div>
<div class="a" style="left:640px;top:457px;width:18px;height:17px;border:1px solid #e4e4e4;background:#fff;"></div>
<div class="t" style="left:663.3px;top:461.5px;font-size:8px;color:#4a7cb8;">Go</div>
<div class="t" style="left:750px;top:462px;font-size:7.5px;color:#777;letter-spacing:0px;">当前11 - 20条 共计22条/3页</div>
<div class="a" style="left:938px;top:220px;width:45px;height:45px;background:#fff;border-radius:4px;"></div>
<div class="t" style="left:938px;top:229.5px;width:45px;text-align:center;font-size:13.5px;font-weight:bold;color:#3a79c6;">1</div>
<div class="t" style="left:938px;top:248px;width:45px;text-align:center;font-size:8px;letter-spacing:-0.35px;color:#555;-webkit-text-stroke:0.2px #555;">待我审批</div>
<div class="a" style="left:938px;top:274.5px;width:45px;height:45px;background:#fff;border-radius:4px;"></div>
<div class="t" style="left:938px;top:284.0px;width:45px;text-align:center;font-size:13.5px;font-weight:bold;color:#3a79c6;">0</div>
<div class="t" style="left:938px;top:302.5px;width:45px;text-align:center;font-size:8px;letter-spacing:-0.35px;color:#555;-webkit-text-stroke:0.2px #555;">正在办件</div>
<div class="a" style="left:1022px;top:0;width:2px;height:517px;background:#ededed;"></div>
<div class="a" style="left:1022px;top:0;width:2px;height:79px;background:#f3f3f3;"></div>
</body></html>
